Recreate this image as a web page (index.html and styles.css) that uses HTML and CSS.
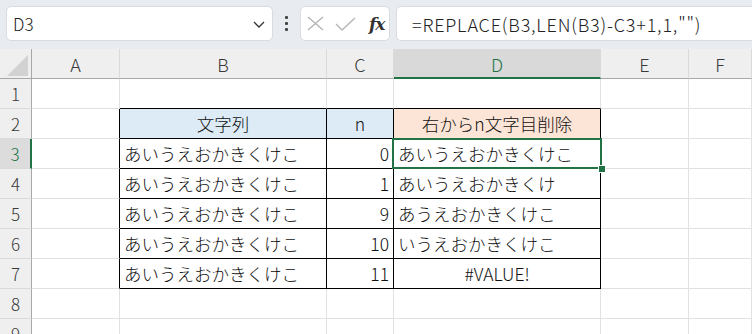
FILE: index.html
```html
<!DOCTYPE html>
<html lang="ja">
<head>
<meta charset="utf-8">
<link rel="stylesheet" href="styles.css">
</head>
<body>
<div class="app">
  <div class="toolbar">
    <div class="namebox">
      <span class="name">D3</span>
      <svg class="chev" width="12" height="7" viewBox="0 0 12 7"><path d="M1 1 L6 6 L11 1" fill="none" stroke="#333" stroke-width="1.3"/></svg>
    </div>
    <div class="dots"><span></span><span></span><span></span></div>
    <div class="fxbox">
      <svg width="17" height="15" viewBox="0 0 17 15"><path d="M1 1 L16 14 M16 1 L1 14" stroke="#b3b3b3" stroke-width="1.3" fill="none"/></svg>
      <svg width="21" height="14" viewBox="0 0 21 14"><path d="M1 7 L7 13 L20 1" stroke="#b3b3b3" stroke-width="1.3" fill="none"/></svg>
      <span class="fx">fx</span>
    </div>
    <div class="formula">=REPLACE(B3,LEN(B3)-C3+1,1,"")</div>
  </div>
  <div class="sheet">
    <div class="corner"><span class="tri"></span></div>
    <div class="ch">A</div><div class="ch">B</div><div class="ch">C</div><div class="ch sel">D</div><div class="ch">E</div><div class="ch">F</div>

    <div class="rh">1</div><div class="c"></div><div class="c bb"></div><div class="c bb"></div><div class="c bb"></div><div class="c"></div><div class="c"></div>

    <div class="rh">2</div><div class="c br"></div><div class="c br bb blue ctr">文字列</div><div class="c br bb blue ctr">n</div><div class="c br bb orange ctr">右からn文字目削除</div><div class="c"></div><div class="c"></div>

    <div class="rh sel">3</div><div class="c br"></div><div class="c br bb">あいうえおかきくけこ</div><div class="c br bb num">0</div><div class="c br bb active">あいうえおかきくけこ<span class="handle"></span></div><div class="c"></div><div class="c"></div>

    <div class="rh">4</div><div class="c br"></div><div class="c br bb">あいうえおかきくけこ</div><div class="c br bb num">1</div><div class="c br bb">あいうえおかきくけ</div><div class="c"></div><div class="c"></div>

    <div class="rh">5</div><div class="c br"></div><div class="c br bb">あいうえおかきくけこ</div><div class="c br bb num">9</div><div class="c br bb">あうえおかきくけこ</div><div class="c"></div><div class="c"></div>

    <div class="rh">6</div><div class="c br"></div><div class="c br bb">あいうえおかきくけこ</div><div class="c br bb num">10</div><div class="c br bb">いうえおかきくけこ</div><div class="c"></div><div class="c"></div>

    <div class="rh">7</div><div class="c br"></div><div class="c br bb">あいうえおかきくけこ</div><div class="c br bb num">11</div><div class="c br bb ctr">#VALUE!</div><div class="c"></div><div class="c"></div>

    <div class="rh">8</div><div class="c"></div><div class="c"></div><div class="c"></div><div class="c"></div><div class="c"></div><div class="c"></div>

    <div class="rh">9</div><div class="c"></div><div class="c"></div><div class="c"></div><div class="c"></div><div class="c"></div><div class="c"></div>
  </div>
</div>
</body>
</html>
```

FILE: styles.css
```css
* { box-sizing: border-box; }
html, body { margin: 0; padding: 0; }
body {
  width: 752px;
  height: 334px;
  overflow: hidden;
  background: #ffffff;
  font-family: "Noto Sans CJK JP", "Noto Sans", sans-serif;
  font-weight: 300;
  color: #111;
}
.app { width: 752px; height: 334px; overflow: hidden; }

.toolbar {
  height: 49px;
  background: #e8ebf0;
  display: flex;
  align-items: flex-start;
  padding: 6px 0 0 6px;
}
.namebox {
  width: 267px;
  height: 35px;
  background: #fff;
  border: 1px solid #d9dbe0;
  border-radius: 5px;
  display: flex;
  align-items: center;
  justify-content: space-between;
  padding: 0 7px 0 6px;
}
.name { font-size: 17px; color: #222; line-height: 1; }
.chev { display: block; margin-top: 1px; }
.dots {
  width: 27px;
  height: 35px;
  display: flex;
  flex-direction: column;
  align-items: center;
  justify-content: center;
  gap: 3px;
}
.dots span { width: 3px; height: 3px; background: #444; border-radius: 1px; }
.fxbox {
  width: 90px;
  height: 35px;
  background: #fff;
  border: 1px solid #d9dbe0;
  border-radius: 5px;
  display: flex;
  align-items: center;
  padding: 0 0 0 6px;
  gap: 11px;
}
.fxbox svg { display: block; }
.fx {
  font-family: "DejaVu Serif", "Liberation Serif", serif;
  font-style: italic;
  font-weight: bold;
  font-size: 17px;
  color: #333;
  margin-left: 2px;
  letter-spacing: -1px;
}
.formula {
  flex: 1;
  height: 35px;
  margin-left: 6px;
  background: #fff;
  border: 1px solid #d9dbe0;
  border-right: none;
  border-radius: 5px 0 0 5px;
  display: flex;
  align-items: center;
  padding-left: 15px;
  font-size: 18px;
  letter-spacing: 0.8px;
  color: #222;
}

.sheet {
  display: grid;
  grid-template-columns: 32px 88px 207px 67px 207px 88px 1fr;
  grid-template-rows: 30px repeat(9, 30px);
  font-size: 17.5px;
}
.corner {
  background: #efefef;
  border-right: 1px solid #a8a8a8;
  border-bottom: 1px solid #a8a8a8;
  position: relative;
}
.tri {
  position: absolute;
  left: 7px;
  top: 6px;
  width: 0;
  height: 0;
  border-style: solid;
  border-width: 0 0 21px 21px;
  border-color: transparent transparent #d2d2d2 transparent;
}
.ch {
  background: #efefef;
  border-right: 1px solid #dadada;
  border-bottom: 1px solid #a8a8a8;
  display: flex;
  align-items: center;
  justify-content: center;
  font-size: 18px;
  color: #3a3a3a;
  padding-top: 1px;
}
.ch.sel {
  background: #d9d9d9;
  border-bottom: 2px solid #217346;
  color: #217346;
}
.rh {
  background: #efefef;
  border-right: 1px solid #a8a8a8;
  border-bottom: 1px solid #dadada;
  display: flex;
  align-items: center;
  justify-content: center;
  font-size: 17px;
  color: #3a3a3a;
}
.rh.sel {
  background: #dcdcdc;
  border-right: 2px solid #217346;
  color: #217346;
}
.c {
  border-right: 1px solid #e1e1e1;
  border-bottom: 1px solid #e1e1e1;
  display: flex;
  align-items: center;
  padding: 0 4px;
  white-space: nowrap;
  color: #111;
}
.c.br { border-right-color: #000; }
.c.bb { border-bottom-color: #000; }
.c.ctr { justify-content: center; }
.c.num { justify-content: flex-end; }
.blue { background: #ddebf7; }
.orange { background: #fce4d6; }
.active { position: relative; }
.active::before {
  content: "";
  position: absolute;
  left: -2px;
  top: -1px;
  right: -2px;
  bottom: -1px;
  border: 2px solid #217346;
}
.handle {
  position: absolute;
  right: -5px;
  bottom: -4px;
  width: 6px;
  height: 6px;
  background: #217346;
  border: 1px solid #fff;
  box-sizing: content-box;
  margin: -1px;
}
```
